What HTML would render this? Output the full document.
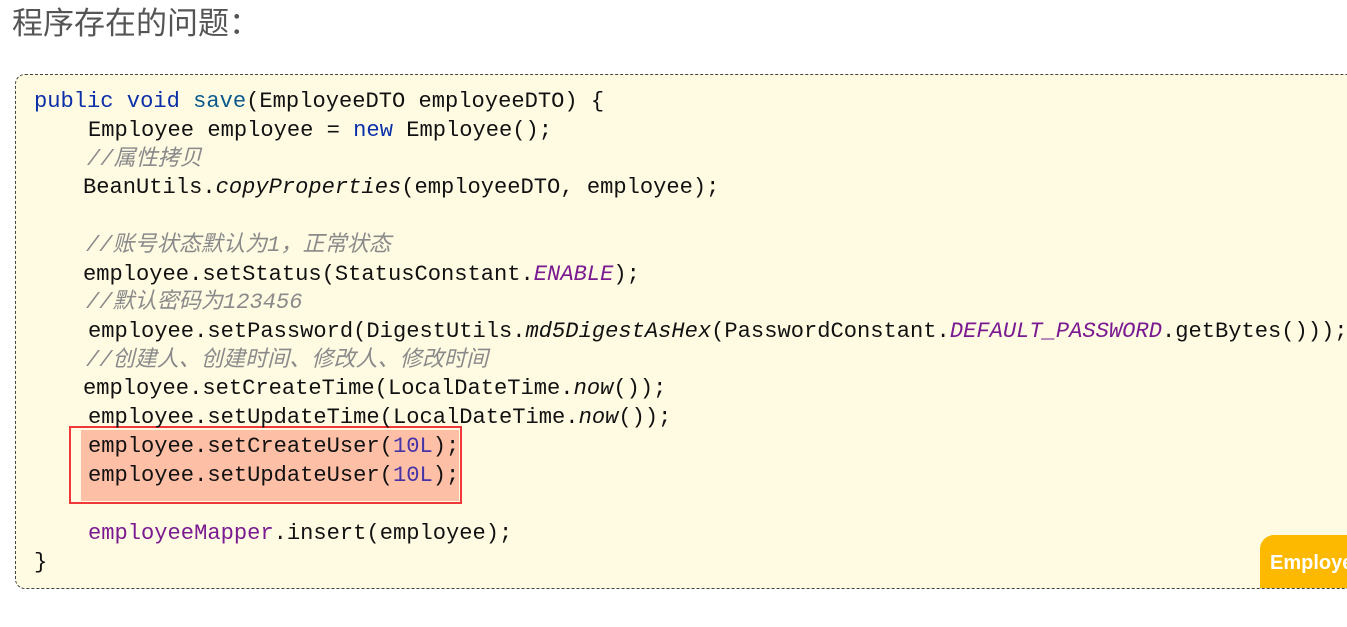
<!DOCTYPE html>
<html><head><meta charset="utf-8"><style>
body{margin:0;width:1347px;height:627px;background:#fff;overflow:hidden;position:relative;font-family:"Liberation Sans","Noto Sans CJK SC",sans-serif}
.t{position:absolute;left:12px;top:3px;font-size:31px;color:#555;line-height:42px}
.box{position:absolute;left:15px;top:74px;width:1360px;height:513px;background:#fffbe3;border:1px dashed #444;border-radius:10px}
.hl{position:absolute;left:81px;top:430px;width:378px;height:71px;background:#fdbfa6}
.red{position:absolute;left:69px;top:426px;width:389px;height:74px;border:2px solid #f0383a}
.l{position:absolute;font-family:"Liberation Mono","Noto Sans CJK SC",monospace;font-size:22.1px;line-height:28px;color:#111;white-space:pre}
.k{color:#0b2fa8}.f{color:#0b5a8a}.c{color:#8a8a8a;font-style:italic}.p{color:#7a1a90;font-style:italic}.n{color:#4633a6}.m{color:#7a1a90}.i{font-style:italic}
.badge{position:absolute;left:1260px;top:535px;width:120px;height:53px;background:#fdb900;border-radius:14px 0 0 0;color:#fff;font-weight:bold;font-size:20px;line-height:56px;padding-left:10px;box-sizing:border-box}
</style></head><body>
<div class="t">程序存在的问题：</div>
<div class="box"></div>
<div class="hl"></div>
<div class="red"></div>
<div class="l" style="left:34px;top:88px"><span class="k">public void</span> <span class="f">save</span>(EmployeeDTO employeeDTO) {</div>
<div class="l" style="left:88px;top:117px">Employee employee = <span class="k">new</span> Employee();</div>
<div class="l" style="left:87px;top:146px"><span class="c">//属性拷贝</span></div>
<div class="l" style="left:83px;top:174px">BeanUtils.<span class="i">copyProperties</span>(employeeDTO, employee);</div>
<div class="l" style="left:86px;top:232px"><span class="c">//账号状态默认为1，正常状态</span></div>
<div class="l" style="left:83px;top:261px">employee.setStatus(StatusConstant.<span class="p">ENABLE</span>);</div>
<div class="l" style="left:86px;top:289px"><span class="c">//默认密码为123456</span></div>
<div class="l" style="left:88px;top:318px">employee.setPassword(DigestUtils.<span class="i">md5DigestAsHex</span>(PasswordConstant.<span class="p">DEFAULT_PASSWORD</span>.getBytes()));</div>
<div class="l" style="left:86px;top:347px"><span class="c">//创建人、创建时间、修改人、修改时间</span></div>
<div class="l" style="left:83px;top:375px">employee.setCreateTime(LocalDateTime.<span class="i">now</span>());</div>
<div class="l" style="left:88px;top:404px">employee.setUpdateTime(LocalDateTime.<span class="i">now</span>());</div>
<div class="l" style="left:88px;top:433px">employee.setCreateUser(<span class="n">10L</span>);</div>
<div class="l" style="left:88px;top:462px">employee.setUpdateUser(<span class="n">10L</span>);</div>
<div class="l" style="left:88px;top:520px"><span class="m">employeeMapper</span>.insert(employee);</div>
<div class="l" style="left:34px;top:549px">}</div>
<div class="badge">Employee</div>
</body></html>
